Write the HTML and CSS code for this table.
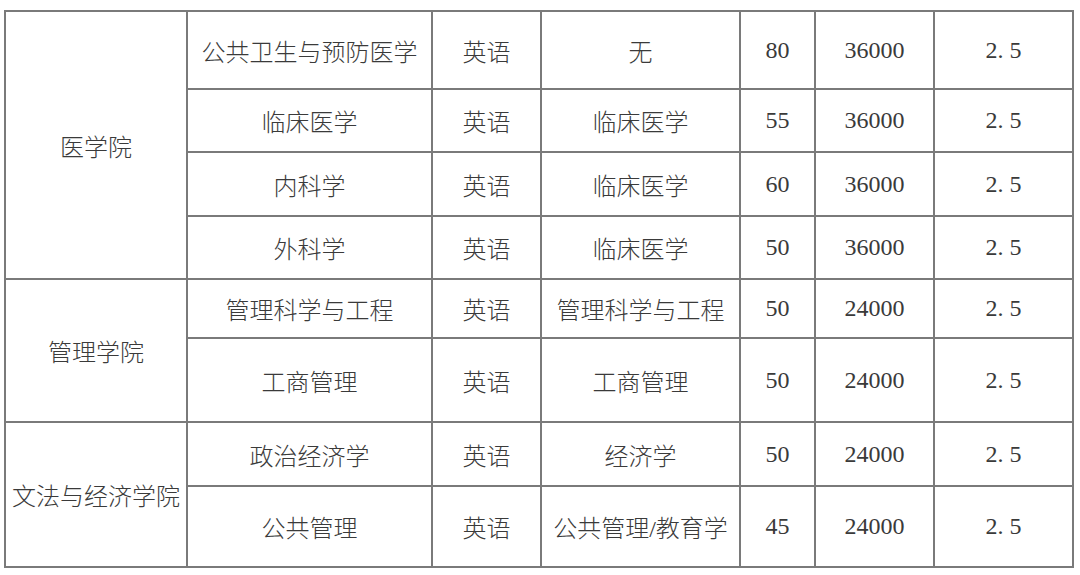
FILE: index.html
```html
<!DOCTYPE html>
<html lang="zh">
<head>
<meta charset="utf-8">
<link rel="stylesheet" href="styles.css">
</head>
<body>
<table class="grid">
  <colgroup>
    <col class="c1"><col class="c2"><col class="c3"><col class="c4"><col class="c5"><col class="c6"><col class="c7">
  </colgroup>
  <tr class="r1">
    <td rowspan="4">医学院</td>
    <td>公共卫生与预防医学</td><td>英语</td><td>无</td><td>80</td><td>36000</td><td>2. 5</td>
  </tr>
  <tr class="r2">
    <td>临床医学</td><td>英语</td><td>临床医学</td><td>55</td><td>36000</td><td>2. 5</td>
  </tr>
  <tr class="r3">
    <td>内科学</td><td>英语</td><td>临床医学</td><td>60</td><td>36000</td><td>2. 5</td>
  </tr>
  <tr class="r4">
    <td>外科学</td><td>英语</td><td>临床医学</td><td>50</td><td>36000</td><td>2. 5</td>
  </tr>
  <tr class="r5">
    <td rowspan="2">管理学院</td>
    <td>管理科学与工程</td><td>英语</td><td>管理科学与工程</td><td>50</td><td>24000</td><td>2. 5</td>
  </tr>
  <tr class="r6">
    <td>工商管理</td><td>英语</td><td>工商管理</td><td>50</td><td>24000</td><td>2. 5</td>
  </tr>
  <tr class="r7">
    <td rowspan="2">文法与经济学院</td>
    <td>政治经济学</td><td>英语</td><td>经济学</td><td>50</td><td>24000</td><td>2. 5</td>
  </tr>
  <tr class="r8">
    <td>公共管理</td><td>英语</td><td>公共管理/教育学</td><td>45</td><td>24000</td><td>2. 5</td>
  </tr>
</table>
</body>
</html>
```

FILE: styles.css
```css
html, body {
  margin: 0;
  padding: 0;
  background: #ffffff;
}
body {
  padding: 10px 0 0 4px;
}
.grid {
  border-collapse: collapse;
  table-layout: fixed;
  width: 1070px;
  font-family: "Liberation Serif", "Noto Sans CJK SC", serif;
  font-size: 24px;
  font-weight: 300;
  color: #3a3a3a;
}
.grid td {
  border: 2px solid #7a7a7a;
  text-align: center;
  vertical-align: middle;
  padding: 0;
  white-space: nowrap;
}
.c1 { width: 182px; }
.c2 { width: 245px; }
.c3 { width: 109px; }
.c4 { width: 199px; }
.c5 { width: 75px; }
.c6 { width: 119px; }
.c7 { width: 139px; }
.r1 { height: 78px; }
.r2 { height: 63px; }
.r3 { height: 64px; }
.r4 { height: 63px; }
.r5 { height: 59px; }
.r6 { height: 84px; }
.r7 { height: 64px; }
.r8 { height: 81px; }
```
